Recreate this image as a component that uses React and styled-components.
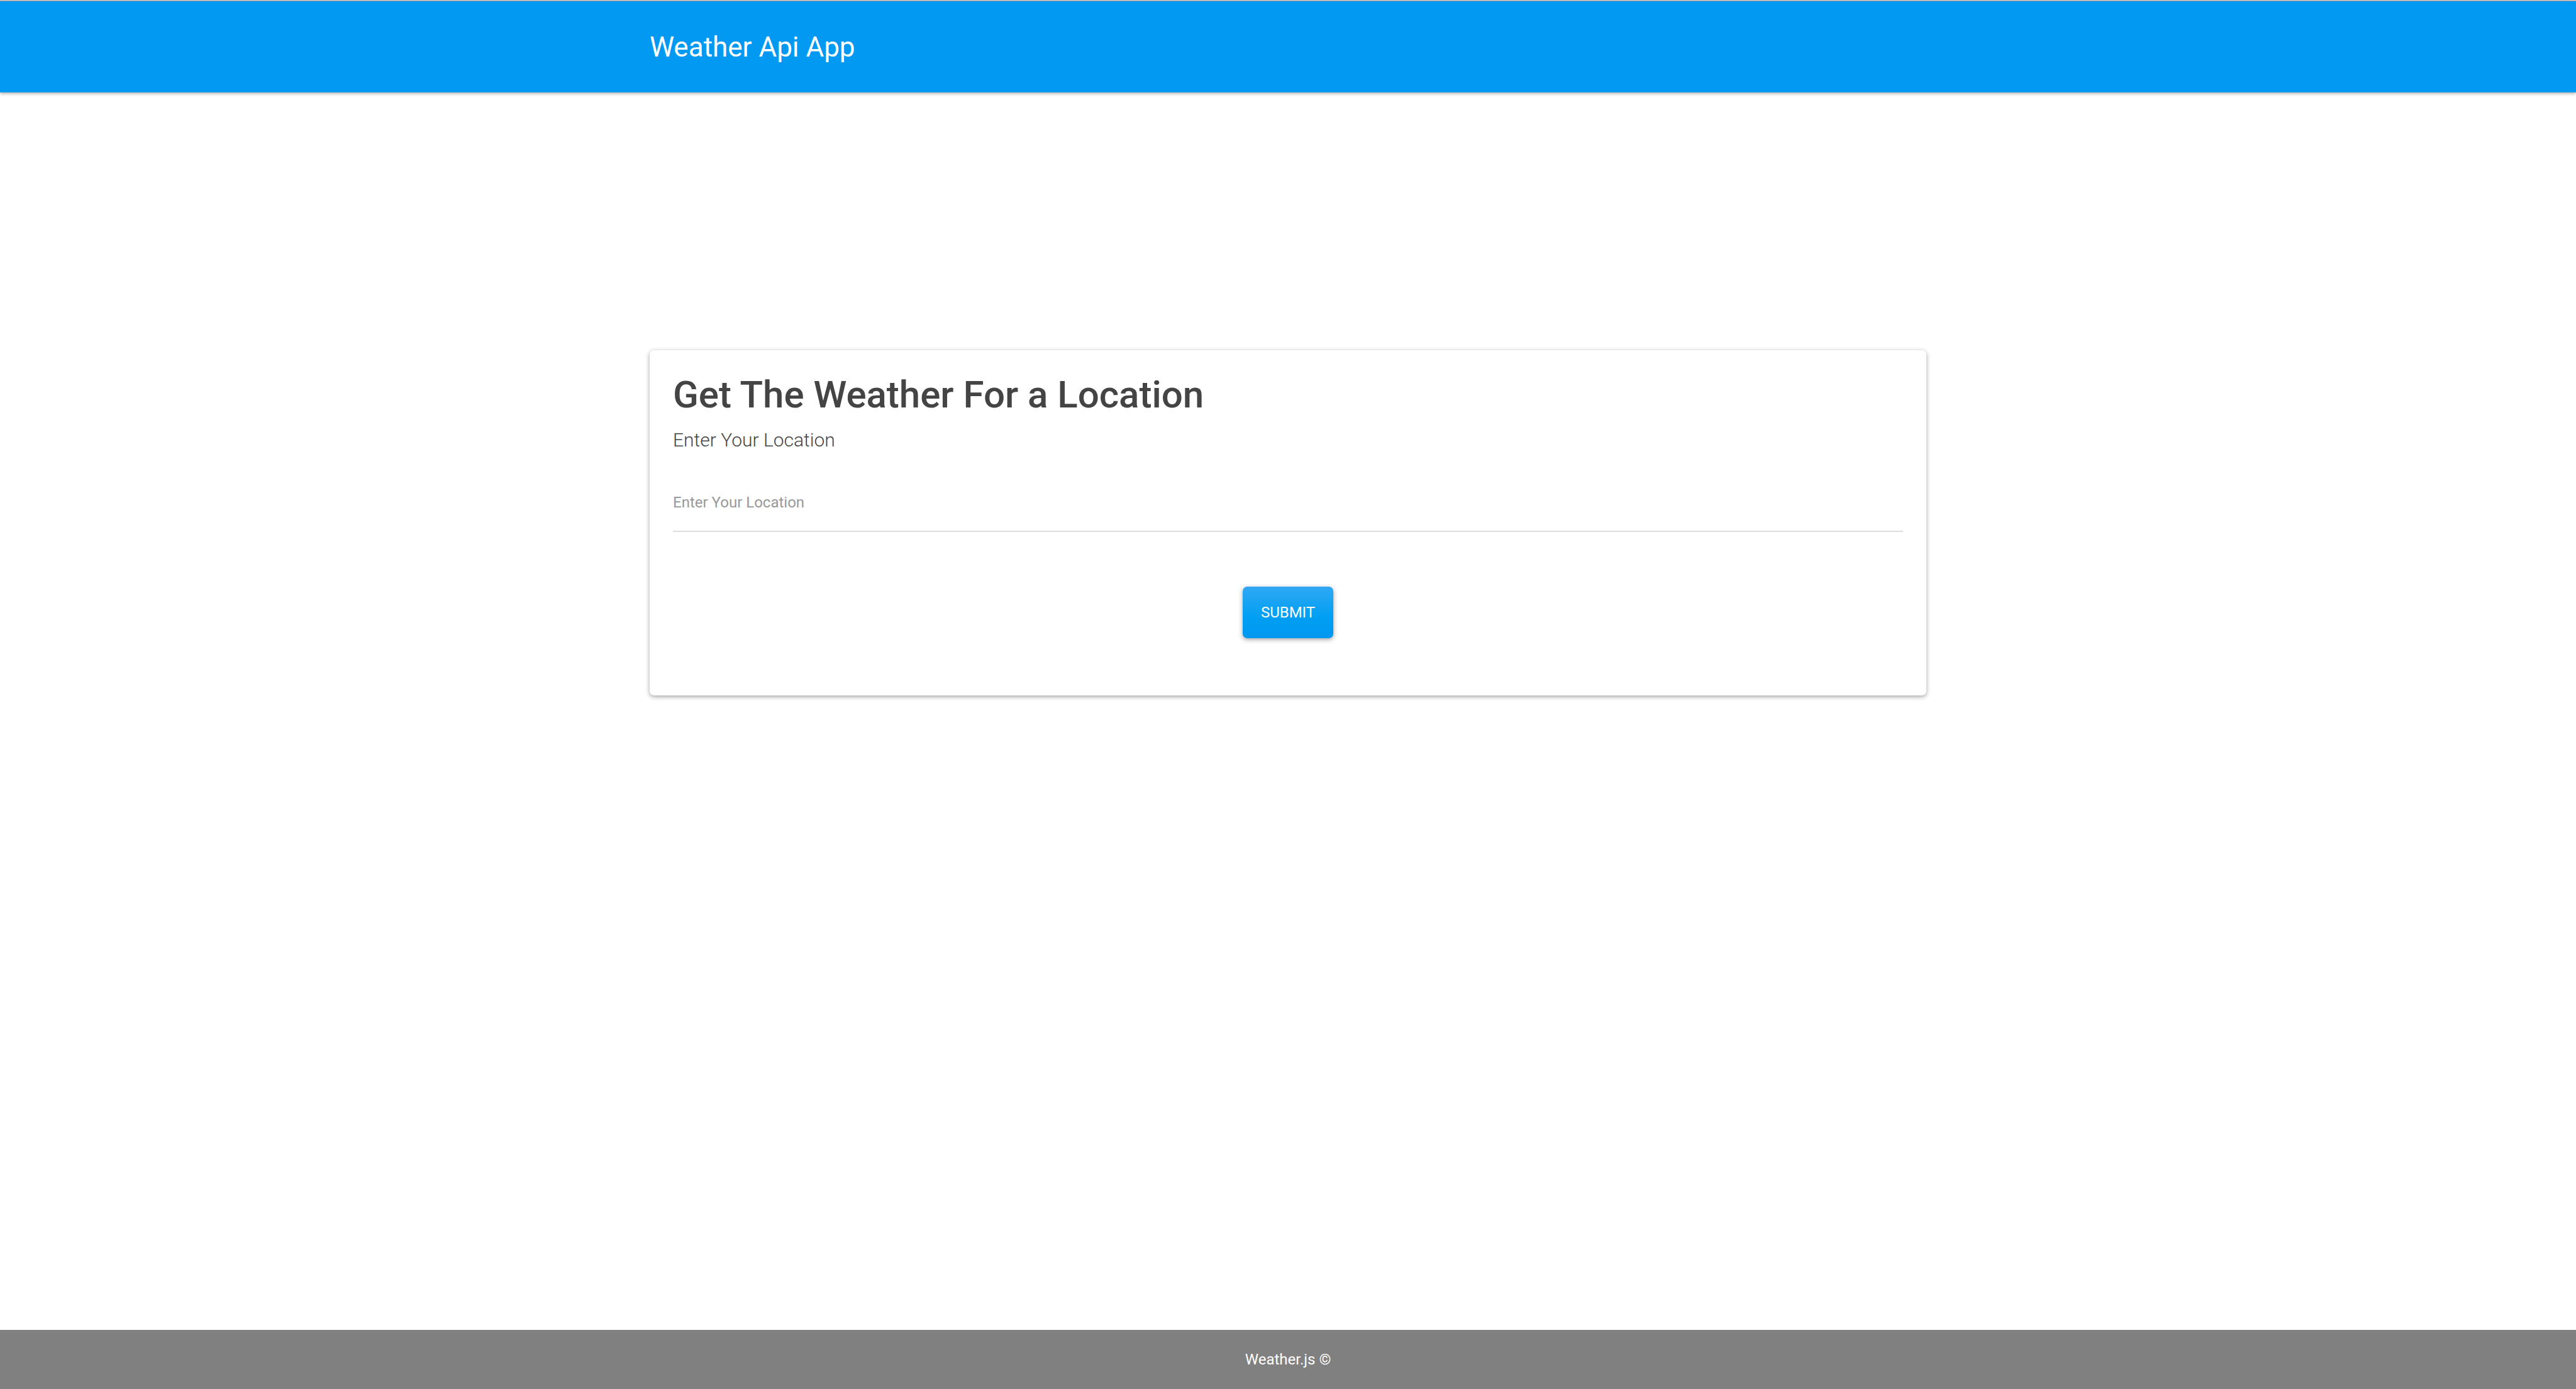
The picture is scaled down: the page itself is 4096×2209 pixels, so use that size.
import React, { useState } from "react";
import styled, { createGlobalStyle } from "styled-components";

const GlobalStyle = createGlobalStyle`
  *, *::before, *::after { box-sizing: border-box; }
  body {
    margin: 0;
    background: #fff;
    color: #444;
    font-family: Roboto, "Liberation Sans", sans-serif;
    font-size: 24px;
  }
`;

const Page = styled.div`
  display: flex;
  flex-direction: column;
  min-height: 100vh;
  border-top: 1px solid #e0e0e0;
`;

const Container = styled.div`
  width: 50%;
  margin: 0 auto;
  padding: 0 9px;
`;

const Header = styled.header`
  display: flex;
  align-items: center;
  height: 146px;
  border-top: 1px solid #999;
  background: #0199f2;
  box-shadow: 0 2px 5px rgba(0, 0, 0, 0.32);
`;

const Brand = styled.h1`
  margin: 0;
  color: #fff;
  font-size: 44px;
  font-weight: 400;
  line-height: 52px;
`;

const Main = styled.main`
  flex: 1;
  padding: 410px 0 92px;
`;

const Card = styled.form`
  display: flex;
  flex-direction: column;
  padding: 35px 37px 91px;
  border-radius: 7px;
  background: #fff;
  box-shadow: 0 2px 7px rgba(0, 0, 0, 0.38);
`;

const Title = styled.h2`
  margin: 0 0 18px;
  font-size: 60px;
  font-weight: 500;
  line-height: 72px;
`;

const FieldLabel = styled.label`
  margin-bottom: 64px;
  font-size: 30px;
  font-weight: 300;
  line-height: 36px;
`;

const TextField = styled.input`
  width: 100%;
  height: 64px;
  margin-bottom: 87px;
  padding: 0 0 28px;
  border: 0;
  border-bottom: 2px solid #ddd;
  border-radius: 0;
  outline: 0;
  background: transparent;
  color: #444;
  font: inherit;

  &::placeholder {
    color: #999;
    opacity: 1;
  }
`;

const SubmitButton = styled.button`
  align-self: center;
  height: 82px;
  padding: 0 29px;
  border: 0;
  border-radius: 7px;
  background: linear-gradient(to bottom, #2fa8f4 0%, #009ff3 60%, #0097f0 100%);
  box-shadow: 0 2px 7px rgba(0, 0, 0, 0.38);
  color: #fff;
  font: inherit;
  text-transform: uppercase;
  cursor: pointer;
`;

const Footer = styled.footer`
  display: flex;
  align-items: center;
  justify-content: center;
  height: 94px;
  background: #808080;
  color: #fff;
`;

export default function App() {
  const [location, setLocation] = useState("");

  return (
    <>
      <GlobalStyle />
      <Page>
        <Header>
          <Container>
            <Brand>Weather Api App</Brand>
          </Container>
        </Header>
        <Main>
          <Container>
            <Card onSubmit={(event) => event.preventDefault()}>
              <Title>Get The Weather For a Location</Title>
              <FieldLabel htmlFor="location">Enter Your Location</FieldLabel>
              <TextField
                id="location"
                type="text"
                placeholder="Enter Your Location"
                value={location}
                onChange={(event) => setLocation(event.target.value)}
              />
              <SubmitButton type="submit">Submit</SubmitButton>
            </Card>
          </Container>
        </Main>
        <Footer>Weather.js ©</Footer>
      </Page>
    </>
  );
}
